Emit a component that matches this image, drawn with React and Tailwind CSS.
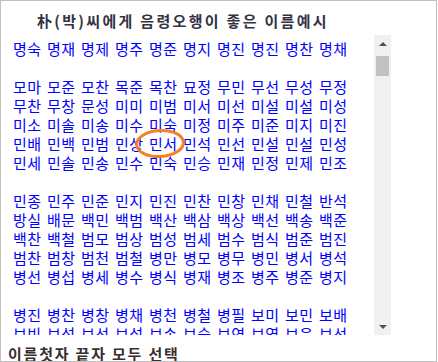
import React from "react";

const rows = [
  "명숙 명재 명제 명주 명준 명지 명진 명진 명찬 명채",
  "",
  "모마 모준 모찬 목준 목찬 묘정 무민 무선 무성 무정",
  "무찬 무창 문성 미미 미범 미서 미선 미설 미설 미성",
  "미소 미솔 미송 미수 미숙 미정 미주 미준 미지 미진",
  "민배 민백 민범 민상 민서 민석 민선 민설 민설 민성",
  "민세 민솔 민송 민수 민숙 민승 민재 민정 민제 민조",
  "",
  "민종 민주 민준 민지 민진 민찬 민창 민채 민철 반석",
  "방실 배문 백민 백범 백산 백삼 백상 백선 백송 백준",
  "백찬 백철 범모 범상 범성 범세 범수 범식 범준 범진",
  "범찬 범창 범천 범철 병만 병모 병무 병민 병서 병석",
  "병선 병섭 병세 병수 병식 병재 병조 병주 병준 병지",
  "",
  "병진 병찬 병창 병채 병천 병철 병필 보미 보민 보배",
  "보빈 보석 보선 보성 보송 보승 보연 보영 보운 보선",
];

const font = { fontFamily: '"Noto Sans CJK KR", "Noto Sans", sans-serif' };

export default function App() {
  return (
    <div
      className="w-[437px] h-[362px] border border-[#c0c0c0] bg-white flex flex-col relative overflow-hidden"
      style={font}
    >
      <div className="h-[34px] shrink-0 flex items-center pl-[36px] pt-[5px]">
        <span className="text-[15px] font-bold text-[#333344] tracking-[2.3px] leading-none">
          朴(박)씨에게 음령오행이 좋은 이름예시
        </span>
      </div>
      <div className="flex h-[300px] w-[390px] shrink-0">
        <div className="flex-1 overflow-hidden pt-[4px] pl-[12px]">
          {rows.map((r, i) => (
            <div key={i} className="h-[19px] flex items-center">
              {r
                ? r.split(" ").map((n, j) => (
                    <span
                      key={j}
                      className="w-[34px] shrink-0 text-[15px] leading-none text-[#0000ff] tracking-[0.5px]"
                    >
                      {n}
                    </span>
                  ))
                : null}
            </div>
          ))}
        </div>
        <div className="w-[17px] h-[300px] bg-[#f0f0f0] flex flex-col items-center">
          <div className="h-[17px] w-full flex items-center justify-center">
            <div className="w-0 h-0 border-l-[4px] border-r-[4px] border-b-[4px] border-l-transparent border-r-transparent border-b-[#505050]" />
          </div>
          <div className="mt-[4px] w-[13px] h-[20px] bg-[#c1c1c1]" />
          <div className="flex-1" />
          <div className="h-[17px] w-full flex items-center justify-center">
            <div className="w-0 h-0 border-l-[4px] border-r-[4px] border-t-[4px] border-l-transparent border-r-transparent border-t-[#505050]" />
          </div>
        </div>
      </div>
      <div className="h-[26px] shrink-0 pl-[7px] pt-[10px] leading-none">
        <span className="text-[15px] font-bold text-[#3a2e2e] tracking-[1.8px] leading-none">
          이름첫자 끝자 모두 선택
        </span>
      </div>
      <svg
        className="absolute left-[133px] top-[127px]"
        width="52"
        height="32"
        viewBox="0 0 52 32"
      >
        <ellipse
          cx="26"
          cy="15.5"
          rx="23.5"
          ry="13"
          fill="none"
          stroke="#f58220"
          strokeWidth="3"
          transform="rotate(-3 26 15.5)"
        />
      </svg>
    </div>
  );
}
